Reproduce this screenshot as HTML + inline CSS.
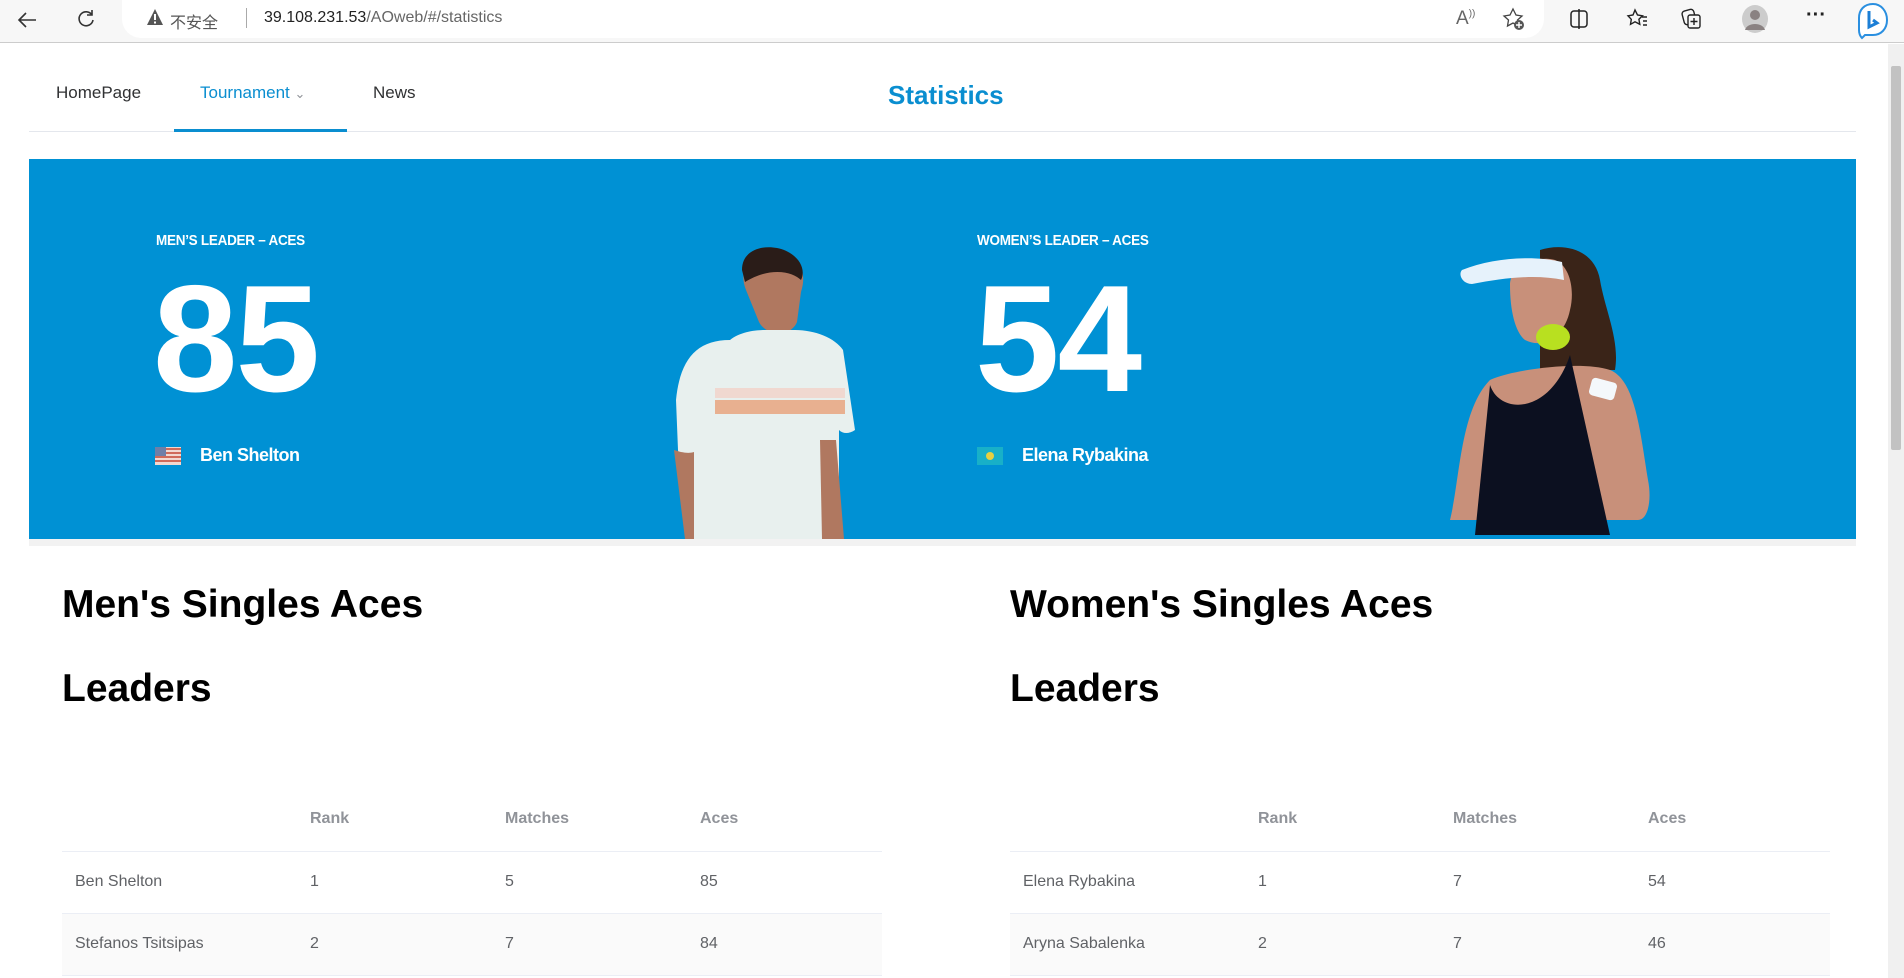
<!DOCTYPE html>
<html><head><meta charset="utf-8"><style>
*{margin:0;padding:0;box-sizing:border-box}
body{width:1904px;height:978px;overflow:hidden;background:#fff;font-family:"Liberation Sans","Noto Sans CJK SC",sans-serif;position:relative}
.abs{position:absolute}
.bar{left:0;top:0;width:1904px;height:43px;background:#f7f7f7;border-bottom:1px solid #ccc}
.url{left:122px;top:0;width:1422px;height:38px;background:#fff;border-radius:0 0 19px 19px}
.nav{font-size:17px;color:#303133;top:83px}
.hdr{font-size:39px;font-weight:bold;color:#000}
table{position:absolute;border-collapse:collapse;font-size:16px;color:#606266;width:820px}
td,th{text-align:left;height:62px;border-bottom:1px solid #ebeef5;padding-left:13px}
th{color:#909399;font-weight:bold;height:64px}
tr.s td{background:#fafafa}
.lab{font-size:15px;font-weight:bold;color:#fff;letter-spacing:-0.3px;transform:scaleX(.9);transform-origin:left}
.big{font-size:152px;font-weight:bold;color:#fff;letter-spacing:-2px;line-height:1}
.nm{font-size:18px;font-weight:bold;color:#fff;letter-spacing:-0.5px}
</style></head><body>
<div class="abs bar"></div>
<div class="abs url"></div>
<svg class="abs" style="left:14px;top:8px" width="28" height="24"><path d="M22 12H6M12 5l-7 7 7 7" stroke="#333" stroke-width="1.6" fill="none"/></svg>
<svg class="abs" style="left:74px;top:7px" width="24" height="24"><path d="M18 8A7 7 0 1 0 19 13M18 3v5h-5" stroke="#333" stroke-width="1.6" fill="none"/></svg>
<svg class="abs" style="left:146px;top:8px" width="18" height="18"><path d="M9 1L17 17H1Z" fill="#555"/><rect x="8" y="6" width="2" height="6" fill="#fff"/><rect x="8" y="13.5" width="2" height="2" fill="#fff"/></svg>
<div class="abs" style="left:170px;top:9px;font-size:16px;color:#555">不安全</div>
<div class="abs" style="left:246px;top:8px;width:1px;height:20px;background:#aaa"></div>
<div class="abs" style="left:264px;top:9px;font-size:16px;color:#222">39.108.231.53<span style="color:#666">/AOweb/#/statistics</span></div>
<div class="abs" style="left:1456px;top:8px;font-size:19px;color:#666">A<sup style="font-size:10px">))</sup></div>
<svg class="abs" style="left:1502px;top:7px" width="24" height="24"><path d="M11 2l3 6 6 1-4.5 4 1 6-5.5-3-5.5 3 1-6L2 9l6-1z" stroke="#444" fill="none" stroke-width="1.3"/><circle cx="17" cy="18" r="5" fill="#555"/><path d="M17 15v6M14 18h6" stroke="#fff" stroke-width="1.4"/></svg>
<svg class="abs" style="left:1568px;top:8px" width="22" height="22"><rect x="3" y="3" width="16" height="16" rx="3" stroke="#222" fill="none" stroke-width="1.5"/><path d="M11 1v20" stroke="#222" stroke-width="1.5"/></svg>
<svg class="abs" style="left:1626px;top:7px" width="24" height="24"><path d="M9 3l2.5 5 5 .8-3.6 3.5.9 5-4.8-2.5-4.5 2.5.8-5L2 8.8 7 8z" stroke="#222" fill="none" stroke-width="1.4"/><path d="M16 10h5M17 14h4M17 18h4" stroke="#222" stroke-width="1.4"/></svg>
<svg class="abs" style="left:1680px;top:7px" width="24" height="24"><rect x="3" y="3" width="12" height="14" rx="3" stroke="#222" fill="none" stroke-width="1.4" transform="rotate(-15 9 10)"/><rect x="8" y="8" width="12" height="13" rx="2" stroke="#222" fill="#f7f7f7" stroke-width="1.4"/><path d="M14 11v7M10.5 14.5h7" stroke="#222" stroke-width="1.4"/></svg>
<svg class="abs" style="left:1740px;top:4px" width="30" height="30"><ellipse cx="15" cy="15" rx="13" ry="14" fill="#ccc"/><circle cx="15" cy="11" r="5" fill="#8a8282"/><path d="M5 26c2-8 18-8 20 0" fill="#8a8282"/></svg>
<div class="abs" style="left:1806px;top:4px;font-size:20px;color:#222;font-weight:bold">···</div>
<svg class="abs" style="left:1856px;top:2px" width="34" height="38"><path d="M17 2C8 2 3 8 3 16v12c0 3 1 6 3 8l3-3 8 0c8 0 14-6 14-15S25 2 17 2z" fill="#fff" stroke="#2a8fe0" stroke-width="2"/><path d="M13 9v16l8-4-4-3" stroke="#1c7fd6" stroke-width="3" fill="none"/></svg>
<div class="abs" style="left:1888px;top:44px;width:16px;height:934px;background:#f0f0f0"></div>
<div class="abs" style="left:1891px;top:66px;width:10px;height:384px;background:#c2c2c2;border-radius:2px"></div>

<div class="abs nav" style="left:56px">HomePage</div>
<div class="abs nav" style="left:200px;color:#0a8ed0">Tournament <span style="color:#909399;font-size:13px">&#8964;</span></div>
<div class="abs nav" style="left:373px">News</div>
<div class="abs" style="left:888px;top:80px;font-size:26px;font-weight:bold;color:#0a8ed0">Statistics</div>
<div class="abs" style="left:29px;top:131px;width:1827px;height:1px;background:#e4e7ed"></div>
<div class="abs" style="left:174px;top:129px;width:173px;height:3px;background:#0a8ed0"></div>

<div class="abs" style="left:29px;top:159px;width:1827px;height:380px;background:#0091d4"></div>
<div class="abs" style="left:29px;top:539px;width:1827px;height:7px;background:#f2f2f2"></div>

<div class="abs lab" style="left:156px;top:232px">MEN’S LEADER – ACES</div>
<div class="abs big" style="left:153px;top:263px">85</div>
<svg class="abs" style="left:155px;top:447px" width="26" height="18"><rect width="26" height="18" fill="#f2d8d0"/><path d="M0 2h26M0 6h26M0 10h26M0 14h26" stroke="#d06a5a" stroke-width="2"/><rect width="11" height="9" fill="#6e7fa8"/></svg>
<div class="abs nm" style="left:200px;top:445px">Ben Shelton</div>

<div class="abs lab" style="left:977px;top:232px">WOMEN’S LEADER – ACES</div>
<div class="abs big" style="left:975px;top:263px">54</div>
<svg class="abs" style="left:977px;top:447px" width="26" height="18"><rect width="26" height="18" fill="#18b0c8"/><circle cx="13" cy="9" r="4" fill="#e6d040"/></svg>
<div class="abs nm" style="left:1022px;top:445px">Elena Rybakina</div>

<svg class="abs" style="left:670px;top:240px" width="200" height="299">
<path d="M76 50c-10-25 10-40 30-38 22 2 32 18 25 40l-4 30c-6 15-30 15-38 0z" fill="#b07860"/>
<path d="M72 30c0-20 20-25 35-22 20 4 30 20 24 32-8-8-30-14-56 2z" fill="#2a1c18"/>
<path d="M60 100c10-8 25-10 35-10l30 0c20 0 40 8 48 20l12 80c-6 4-12 4-16 0l0 109H20L8 210l-2-50c4-40 20-60 54-60z" fill="#e8f0ee"/>
<path d="M45 160h130v14H45z" fill="#e8b090"/><path d="M45 148h130v10H45z" fill="#f0d8d0"/>
<path d="M4 210c6 2 14 4 20 2v87H15z" fill="#b07860"/><path d="M150 200l16 0 8 99h-22z" fill="#b07860"/>
</svg>
<svg class="abs" style="left:1440px;top:240px" width="220" height="299">
<path d="M100 10c25-8 55 0 60 30 5 30 20 60 15 90H100z" fill="#3a2418"/>
<path d="M70 45c0-20 30-30 45-25 15 6 20 30 15 50-5 25-25 40-45 30-10-8-15-30-15-55z" fill="#c8907a"/>
<path d="M22 30c30-12 70-15 100-8l2 18c-30-6-60-2-92 4-10 0-14-10-10-14z" fill="#e6f2fb"/>
<path d="M50 140c20-10 90-20 120-10 25 10 30 60 38 110 4 20 0 40-10 40H10c10-40 10-110 40-140z" fill="#c8907a"/>
<path d="M50 145c10 30 60 30 80-30l40 180H35z" fill="#0c1020"/>
<ellipse cx="113" cy="97" rx="17" ry="13" fill="#b8e020"/>
<rect x="150" y="140" width="26" height="18" rx="4" fill="#f4f8fb" transform="rotate(15 163 149)"/>
</svg>

<div class="abs hdr" style="left:62px;top:583px">Men's Singles Aces</div>
<div class="abs hdr" style="left:62px;top:667px">Leaders</div>
<div class="abs hdr" style="left:1010px;top:583px">Women's Singles Aces</div>
<div class="abs hdr" style="left:1010px;top:667px">Leaders</div>

<table style="left:62px;top:787px"><colgroup><col style="width:235px"><col style="width:195px"><col style="width:195px"><col></colgroup>
<tr><th></th><th>Rank</th><th>Matches</th><th>Aces</th></tr>
<tr><td>Ben Shelton</td><td>1</td><td>5</td><td>85</td></tr>
<tr class="s"><td>Stefanos Tsitsipas</td><td>2</td><td>7</td><td>84</td></tr>
</table>
<table style="left:1010px;top:787px"><colgroup><col style="width:235px"><col style="width:195px"><col style="width:195px"><col></colgroup>
<tr><th></th><th>Rank</th><th>Matches</th><th>Aces</th></tr>
<tr><td>Elena Rybakina</td><td>1</td><td>7</td><td>54</td></tr>
<tr class="s"><td>Aryna Sabalenka</td><td>2</td><td>7</td><td>46</td></tr>
</table>
</body></html>
